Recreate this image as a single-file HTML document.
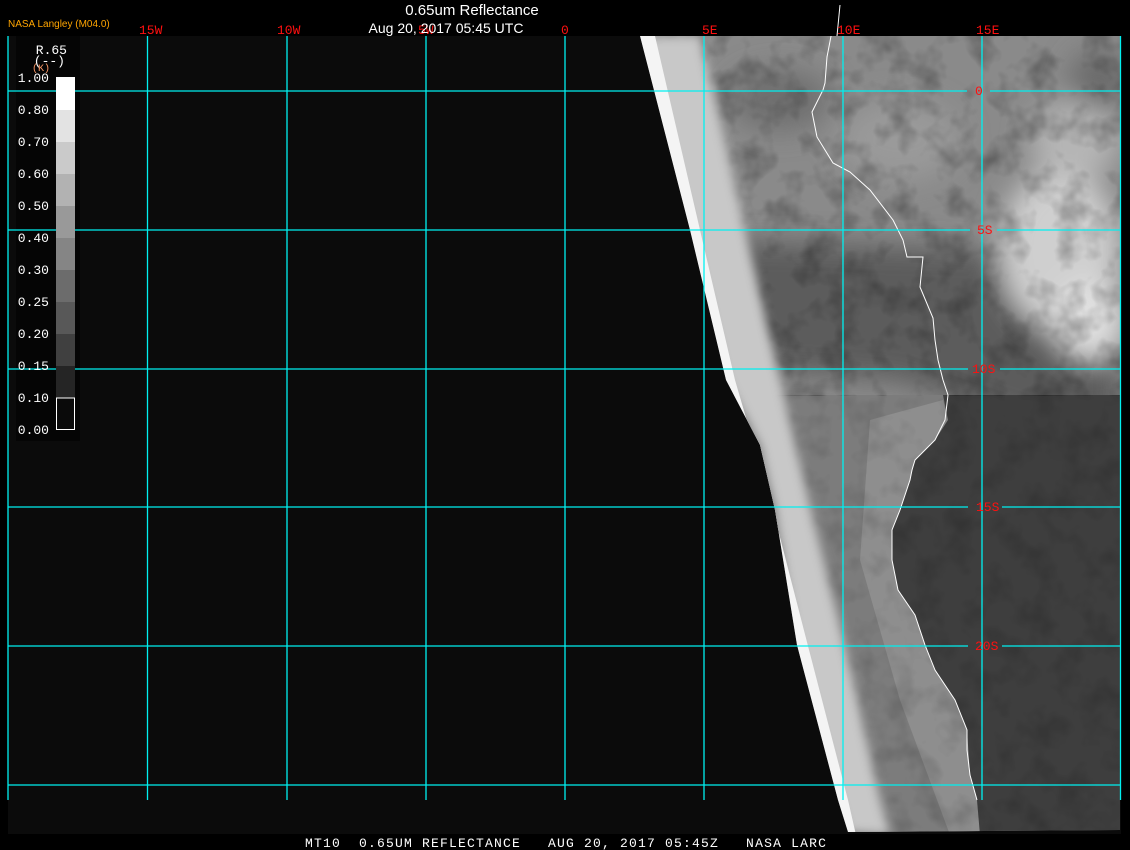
<!DOCTYPE html>
<html><head><meta charset="utf-8"><style>
html,body{margin:0;padding:0;background:#000;width:1130px;height:850px;overflow:hidden}
svg{display:block}
.m{font-family:"Liberation Mono","DejaVu Sans Mono",monospace}
.s{font-family:"Liberation Sans",sans-serif}
</style></head><body>
<svg width="1130" height="850" xmlns="http://www.w3.org/2000/svg">
<defs>
<filter id="n" x="0" y="0" width="100%" height="100%">
<feTurbulence type="fractalNoise" baseFrequency="0.035" numOctaves="3" seed="3"/>
<feColorMatrix type="matrix" values="0 0 0 0 0  0 0 0 0 0  0 0 0 0 0  0 0 0 -1.8 1.0"/>
</filter>
<filter id="b"><feGaussianBlur stdDeviation="14"/></filter>
<filter id="b2"><feGaussianBlur stdDeviation="5"/></filter>
<clipPath id="sat"><polygon points="640,36 1120,36 1120,830 848,832 838,800 797,645 775,510 760,445 726,380 690,230"/></clipPath>
</defs>
<rect x="0" y="0" width="1130" height="850" fill="#000"/>
<rect x="8" y="36" width="1113" height="798" fill="#0b0b0b"/>
<g clip-path="url(#sat)">
<rect x="630" y="36" width="500" height="800" fill="#8a8a8a"/>
<!-- dark band around 5S-10S -->
<g filter="url(#b)">
<polygon points="690,240 1000,250 1120,330 1120,420 1050,430 900,380 760,370 720,300" fill="#5c5c5c"/>
<ellipse cx="1060" cy="250" rx="60" ry="80" fill="#cfcfcf"/>
<ellipse cx="1090" cy="320" rx="35" ry="40" fill="#e0e0e0"/>
<ellipse cx="1075" cy="140" rx="45" ry="40" fill="#b5b5b5"/>
<ellipse cx="900" cy="140" rx="60" ry="40" fill="#9a9a9a"/>
<ellipse cx="780" cy="100" rx="50" ry="30" fill="#6e6e6e"/>
<ellipse cx="1100" cy="80" rx="30" ry="30" fill="#6a6a6a"/>
</g>
<!-- lower ocean -->
<polygon points="700,395 943,395 948,420 935,440 915,460 910,480 900,510 892,530 892,560 898,590 915,615 925,645 935,670 955,700 967,730 970,775 977,800 980,835 700,835" fill="#7c7c7c"/>
<polygon points="870,420 943,400 948,420 935,440 915,460 910,480 900,510 892,530 892,560 898,590 915,615 925,645 935,670 955,700 967,730 970,775 977,800 980,835 950,835 900,700 860,560" fill="#8e8e8e"/>
<!-- land darker -->
<polygon points="943,395 948,420 935,440 915,460 910,480 900,510 892,530 892,560 898,590 915,615 925,645 935,670 955,700 967,730 970,775 977,800 980,835 1130,835 1130,395" fill="#3e3e3e"/>
<rect x="630" y="36" width="500" height="360" fill="#000" filter="url(#n)" opacity="0.35"/>
<rect x="630" y="395" width="500" height="440" fill="#000" filter="url(#n)" opacity="0.18"/>
<!-- limb -->
<g filter="url(#b2)">
<polygon points="640,36 700,36 745,230 780,380 810,507 845,646 880,800 890,835 848,832 838,800 797,645 775,510 760,445 726,380 690,230" fill="#c8c8c8"/>
</g>
<polygon points="640,36 655,36 700,230 735,380 773,510 808,646 848,800 856,835 848,832 838,800 797,645 775,510 760,445 726,380 690,230" fill="#f4f4f4"/>
<polyline points="837,5 827,57 825,83 823,90 812,112 817,137 833,163 850,172 870,190 893,220 903,240 907,257 923,257 920,287 933,318 935,340 938,360 943,380 948,395 945,420 935,440 925,450 915,460 912,470 910,480 900,510 892,530 892,560 898,590 915,615 925,645 935,670 955,700 967,730 967,750 970,775 977,800" fill="none" stroke="#fff" stroke-width="1"/>
</g>
<polyline points="840,5 837,36" fill="none" stroke="#fff" stroke-width="1"/>
<!-- grid -->
<g stroke="#00f0f0" stroke-width="1.3" fill="none">
<line x1="8" y1="36" x2="8" y2="800"/><line x1="147.5" y1="36" x2="147.5" y2="800"/><line x1="287" y1="36" x2="287" y2="800"/><line x1="426" y1="36" x2="426" y2="800"/><line x1="565" y1="36" x2="565" y2="800"/><line x1="704" y1="36" x2="704" y2="800"/><line x1="843" y1="36" x2="843" y2="800"/><line x1="982" y1="36" x2="982" y2="800"/><line x1="1120.5" y1="36" x2="1120.5" y2="800"/>
<line x1="8" y1="91" x2="967" y2="91"/><line x1="990" y1="91" x2="1121" y2="91"/>
<line x1="8" y1="230" x2="970" y2="230"/><line x1="997" y1="230" x2="1121" y2="230"/>
<line x1="8" y1="369" x2="968" y2="369"/><line x1="1000" y1="369" x2="1121" y2="369"/>
<line x1="8" y1="507" x2="968" y2="507"/><line x1="1002" y1="507" x2="1121" y2="507"/>
<line x1="8" y1="646" x2="968" y2="646"/><line x1="1002" y1="646" x2="1121" y2="646"/>
<line x1="8" y1="785" x2="1121" y2="785"/>
</g>
<g class="m" fill="#ff1010" font-size="13">
<text x="139" y="34">15W</text><text x="277" y="34">10W</text><text x="418" y="34">5W</text><text x="561" y="34">0</text><text x="702" y="34">5E</text><text x="837" y="34">10E</text><text x="976" y="34">15E</text>
<text x="975" y="95">0</text><text x="977" y="234">5S</text><text x="972" y="373">10S</text><text x="976" y="511">15S</text><text x="975" y="650">20S</text>
</g>
<!-- titles -->
<text class="s" x="472" y="15" fill="#fff" font-size="15" text-anchor="middle">0.65um Reflectance</text>
<text class="s" x="446" y="33" fill="#fff" font-size="14" text-anchor="middle">Aug 20, 2017 05:45 UTC</text>
<text class="s" x="8" y="27" fill="#ffa500" font-size="10">NASA Langley (M04.0)</text>
<!-- legend -->
<rect x="16" y="36" width="64" height="405" fill="#050505"/>
<line x1="16" y1="91" x2="80" y2="91" stroke="#00f0f0" stroke-width="1.3"/><line x1="16" y1="230" x2="80" y2="230" stroke="#00f0f0" stroke-width="1.3"/><line x1="16" y1="369" x2="80" y2="369" stroke="#00f0f0" stroke-width="1.3"/>
<g>
<rect x="56" y="77" width="19" height="33" fill="#fff"/>
<rect x="56" y="110" width="19" height="32" fill="#e3e3e3"/>
<rect x="56" y="142" width="19" height="32" fill="#cacaca"/>
<rect x="56" y="174" width="19" height="32" fill="#b2b2b2"/>
<rect x="56" y="206" width="19" height="32" fill="#999"/>
<rect x="56" y="238" width="19" height="32" fill="#858585"/>
<rect x="56" y="270" width="19" height="32" fill="#6c6c6c"/>
<rect x="56" y="302" width="19" height="32" fill="#585858"/>
<rect x="56" y="334" width="19" height="32" fill="#404040"/>
<rect x="56" y="366" width="19" height="32" fill="#252525"/>
<rect x="56.5" y="398" width="18" height="31.5" fill="#0a0a0a" stroke="#fff" stroke-width="1"/>
</g>
<g class="m" fill="#fff" font-size="13" text-anchor="end">
<text x="67" y="54">R.65</text><text x="65" y="65">(--)</text>
<text x="49" y="82">1.00</text><text x="49" y="114">0.80</text><text x="49" y="146">0.70</text><text x="49" y="178">0.60</text><text x="49" y="210">0.50</text><text x="49" y="242">0.40</text><text x="49" y="274">0.30</text><text x="49" y="306">0.25</text><text x="49" y="338">0.20</text><text x="49" y="370">0.15</text><text x="49" y="402">0.10</text><text x="49" y="434">0.00</text>
</g>
<text class="m" x="32" y="71" fill="#ff9966" font-size="10">(K)</text>
<text class="m" x="305" y="847" fill="#fff" font-size="13" letter-spacing="1.2" xml:space="preserve">MT10  0.65UM REFLECTANCE   AUG 20, 2017 05:45Z   NASA LARC</text>
</svg>
</body></html>
